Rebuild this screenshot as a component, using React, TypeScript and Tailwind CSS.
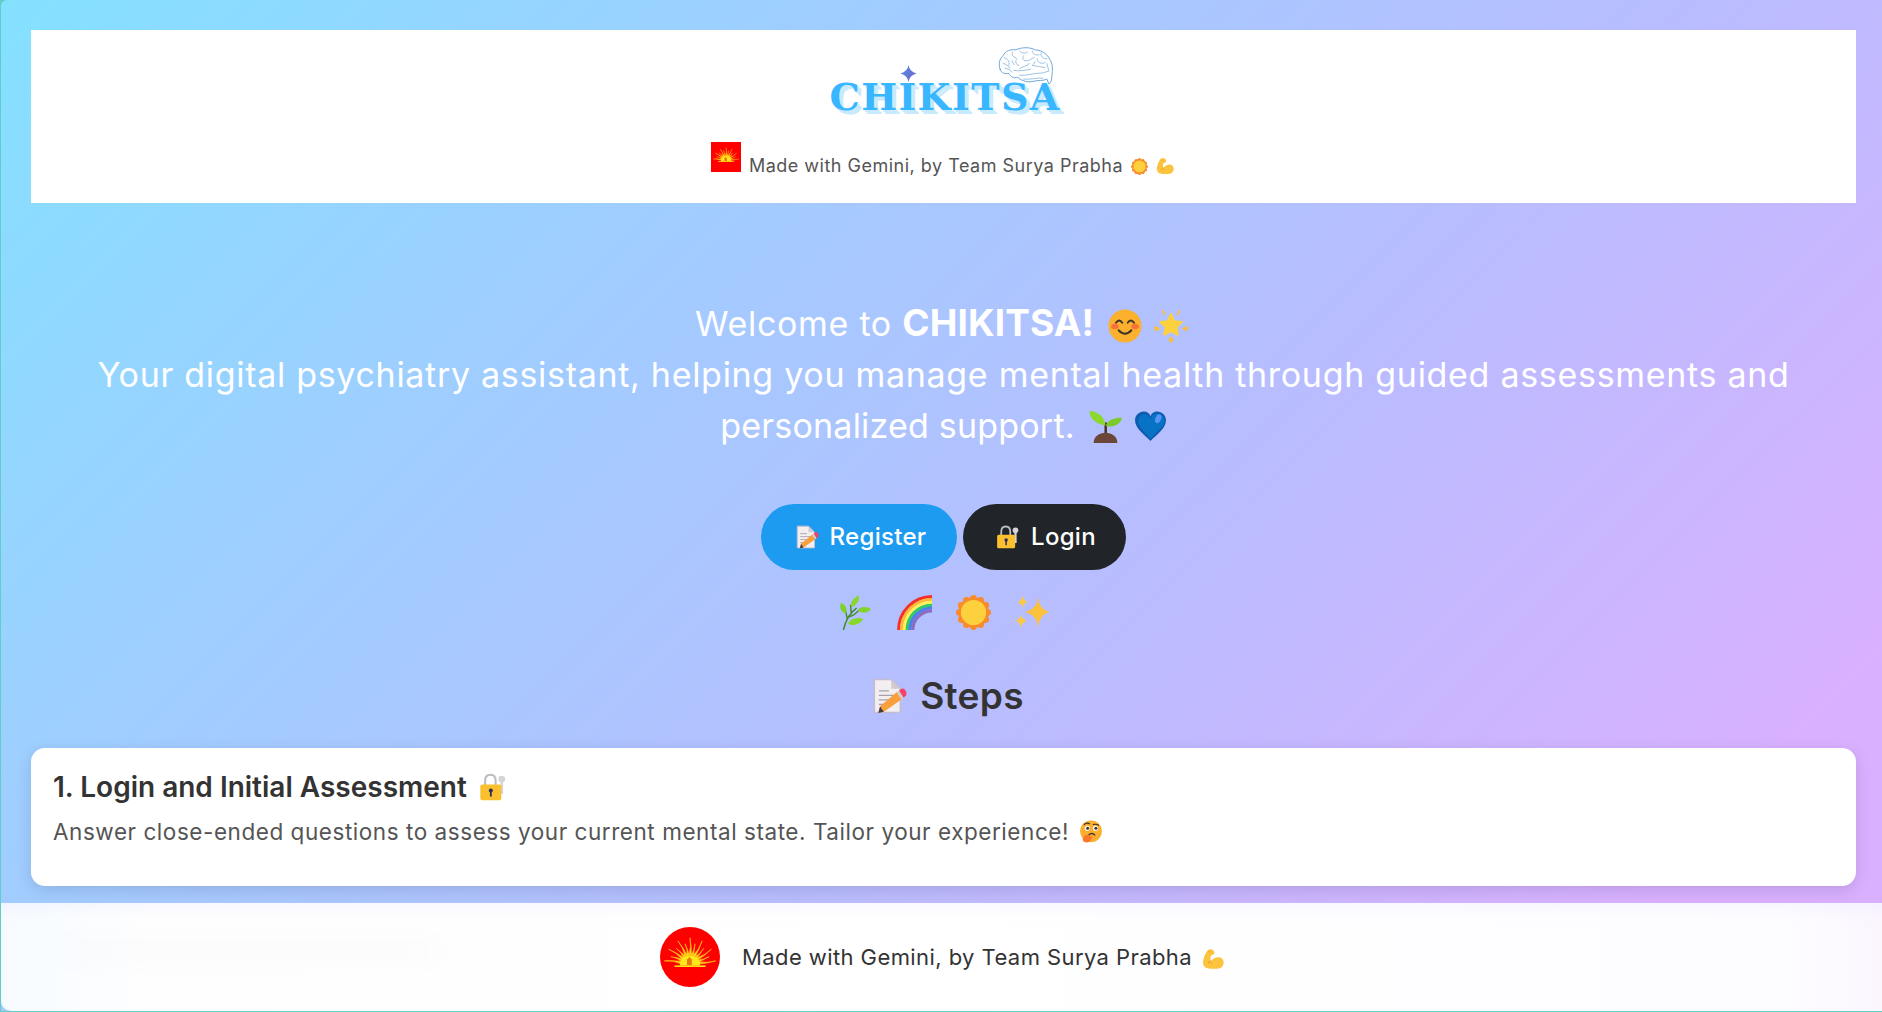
import React from "react";

function Smile({ s }: { s: number }) {
  return (
    <svg width={s} height={s} viewBox="0 0 32 32" className="inline-block shrink-0">
      <circle cx="16" cy="16" r="15.5" fill="#fbb02e" />
      <ellipse cx="6.5" cy="16.5" rx="3.5" ry="2.6" fill="#f8703c" />
      <ellipse cx="25.5" cy="16.5" rx="3.5" ry="2.6" fill="#f8703c" />
      <path d="M7.5 13 Q10.5 8.5 13.5 13 M18.5 13 Q21.5 8.5 24.5 13" fill="none" stroke="#40322c" strokeWidth="1.8" strokeLinecap="round" />
      <path d="M10 20 Q16 26.5 22 20" fill="none" stroke="#40322c" strokeWidth="1.8" strokeLinecap="round" />
    </svg>
  );
}
function GlowStar({ s }: { s: number }) {
  return (
    <svg width={s} height={s} viewBox="0 0 32 32" className="inline-block shrink-0">
      <path d="M16 5 L19 11.5 L26 12.3 L21 17.2 L22.4 24.2 L16 20.8 L9.6 24.2 L11 17.2 L6 12.3 L13 11.5 Z" fill="#fdd13e" stroke="#fdd13e" strokeWidth="2" strokeLinejoin="round" />
      <path d="M8 1.5 L10 5 M24 1.5 L22 5 M1 17 L4.5 18.5 L1.5 20 Z M31 17 L27.5 18.5 L30.5 20 Z M16 26.5 L14.5 29.5 Q16 32 17.5 29.5 Z" fill="#f9bd38" stroke="#f9bd38" strokeWidth="1.6" strokeLinecap="round" strokeLinejoin="round" />
    </svg>
  );
}
function Seedling({ s }: { s: number }) {
  return (
    <svg width={s} height={s} viewBox="0 0 32 32" className="inline-block shrink-0">
      <path d="M15 12 h2.4 V26 h-2.4Z" fill="#4f2f22" />
      <path d="M16 15 C16 8 9 1 0.5 1 C0 8 7 14 16 15Z" fill="#8bd82f" />
      <path d="M16.4 15.5 C18 9.5 24 7.5 32 7.5 C31 13.5 24 17.5 16.4 15.5Z" fill="#7bc92a" />
      <path d="M4.5 32 C4.5 25.5 10 22 16 22 C22 22 27.5 25.5 27.5 32 Z" fill="#6b4737" />
    </svg>
  );
}
function BlueHeart({ s }: { s: number }) {
  return (
    <svg width={s} height={s} viewBox="0 0 32 32" className="inline-block shrink-0">
      <path d="M16 30 C10 24 1 18 1 10 C1 5 5 1.5 9.5 1.5 C12.5 1.5 15 3 16 6 C17 3 19.5 1.5 22.5 1.5 C27 1.5 31 5 31 10 C31 18 22 24 16 30Z" fill="#0d5cb0" />
      <path d="M16 28 C12 23 4 17 4 10.5 C4 6.5 7 4 10 4 C13 4 15 6 16 8.5 C17 6 19 3.5 22 3.5 C27 3.5 29.5 7 29.5 10.5 C29.5 17 20 23 16 28Z" fill="#0872c4" />
      <ellipse cx="23.5" cy="8.5" rx="2.8" ry="4.4" transform="rotate(22 23.5 8.5)" fill="#5a94f5" />
    </svg>
  );
}
function Memo({ s }: { s: number }) {
  return (
    <svg width={s} height={s} viewBox="0 0 32 32" className="inline-block shrink-0">
      <path d="M3 1.5 H18 L26 9.5 V30.5 H3Z" fill="#f3eef0" stroke="#c4bcc8" strokeWidth="1.2" />
      <path d="M18 1.5 V9.5 H26Z" fill="#d0c9d2" />
      <path d="M7 11.5 H16 M7 15.5 H22 M7 19.5 H17 M7 23.5 H11" stroke="#a8a0ae" strokeWidth="1.2" />
      <path d="M8 25 L11.5 30 L27 19 L23 12.5Z" fill="#f7a03c" />
      <path d="M6.5 31 L8 25 L11.5 30Z" fill="#4d3a30" />
      <path d="M23 12.5 L27 19 L29 17.5 L25 11Z" fill="#d4cbc9" />
      <path d="M25 11 L29 17.5 L31.5 15 Q32 12 29.5 9.5 Q27 9 25 11Z" fill="#f5406c" />
    </svg>
  );
}
function LockKey({ s }: { s: number }) {
  return (
    <svg width={s} height={s} viewBox="0 0 32 32" className="inline-block shrink-0">
      <path d="M7 15 V9 Q7 2 13 2 Q19 2 19 9 V15" fill="none" stroke="#bdbac0" strokeWidth="2.4" />
      <circle cx="26" cy="7" r="3.8" fill="#d7d4d8" />
      <rect x="24.5" y="9" width="3" height="15" fill="#d7d4d8" />
      <rect x="1.5" y="13" width="24" height="18" rx="2" fill="#fbc02d" />
      <circle cx="13.5" cy="20" r="2.3" fill="#2f2a5e" />
      <rect x="12.5" y="20" width="2" height="7" rx="0.8" fill="#2f2a5e" />
    </svg>
  );
}
function Herb({ s }: { s: number }) {
  return (
    <svg width={s} height={s} viewBox="0 0 32 32" className="inline-block shrink-0">
      <path d="M5 32 Q8 18 17 12 M8.5 22 L7 15 M12 16 L11.5 9 M10 20 Q15 19 21 12" fill="none" stroke="#3f8a22" strokeWidth="1.3" />
      <path d="M7 17 C2 15 1 10 3 7 C7 9 9 13 7 17Z" fill="#7ed321" />
      <path d="M12 11 C11 6 15 2 19 0.5 C20 5 17 10 12 11Z" fill="#8ad52f" />
      <path d="M18 14 C20 10 27 10 30 13 C27 17 21 17 18 14Z" fill="#83d42a" />
      <path d="M9 26 C12 21 19 20 23 22 C20 27 14 29 9 26Z" fill="#87d72c" />
    </svg>
  );
}
function Rainbow({ s }: { s: number }) {
  const cols = ["#f5312c", "#ffb938", "#fff15a", "#2fcb62", "#4f7cf0", "#8a6cc0"];
  return (
    <svg width={s} height={s} viewBox="0 0 32 32" className="inline-block shrink-0">
      {cols.map((c, i) => (
        <path key={c} d={`M${1.5 + i * 2.6} 32 A${30.5 - i * 2.6} ${30.5 - i * 2.6} 0 0 1 32 ${1.5 + i * 2.6}`} fill="none" stroke={c} strokeWidth="2.8" />
      ))}
    </svg>
  );
}
function Sun({ s }: { s: number }) {
  const pts = Array.from({ length: 12 }, (_, i) => i * 30);
  return (
    <svg width={s} height={s} viewBox="0 0 32 32" className="inline-block shrink-0">
      <circle cx="16" cy="16" r="14" fill="#f98b2a" />
      {pts.map((a) => (
        <circle key={a} cx={16 + 13 * Math.cos((a * Math.PI) / 180)} cy={16 + 13 * Math.sin((a * Math.PI) / 180)} r="3" fill="#f98b2a" />
      ))}
      <circle cx="16" cy="16" r="11.5" fill="#fdd13e" />
    </svg>
  );
}
function Sparkles({ s }: { s: number }) {
  return (
    <svg width={s} height={s} viewBox="0 0 32 32" className="inline-block shrink-0">
      <path d="M21 2 Q22 13 31.5 15.5 Q22 18 21 30 Q20 18 9 15.5 Q20 13 21 2Z" fill="#fbc13c" />
      <path d="M7 0.5 Q7.5 5 11.5 6.5 Q7.5 8 7 12 Q6.5 8 2.5 6.5 Q6.5 5 7 0.5Z" fill="#fdc93f" />
      <path d="M5.5 17.5 Q6 22 11 23.5 Q6 25 5.5 30 Q5 25 0 23.5 Q5 22 5.5 17.5Z" fill="#fdc93f" />
    </svg>
  );
}
function Muscle({ s }: { s: number }) {
  return (
    <svg width={s} height={s} viewBox="0 0 32 32" className="inline-block shrink-0">
      <path d="M10 2 C7 4 3 10 1.5 20 C1 27 6 30 12 30 H22 C28 30 31.5 26 31.5 21 C31.5 14 24 11.5 18 15 C15.5 16.5 13.5 18 12.5 19 C12 16 12.5 13 13.5 10.5 C15.5 10.5 18 10 18 7 C18 3 14 1 10 2Z" fill="#fcc43e" />
      <path d="M9 5 L12 6 M9 23 L11.5 18.5 L14 23" fill="none" stroke="#e8a020" strokeWidth="1.2" strokeLinecap="round" />
    </svg>
  );
}
function Thinking({ s }: { s: number }) {
  return (
    <svg width={s} height={s} viewBox="0 0 32 32" className="inline-block shrink-0">
      <circle cx="16" cy="15" r="14.5" fill="#fbaf2e" />
      <circle cx="11" cy="11" r="3.4" fill="#fff" /><circle cx="11.5" cy="11" r="2" fill="#40322c" />
      <circle cx="22" cy="11" r="3.4" fill="#fff" /><circle cx="22.5" cy="11" r="2" fill="#40322c" />
      <path d="M7 6 Q10 3 14 5 M19 6 Q23 5 26 7" stroke="#40322c" strokeWidth="1.6" fill="none" strokeLinecap="round" />
      <path d="M13 20 Q17 16 21 20" stroke="#40322c" strokeWidth="1.8" fill="none" strokeLinecap="round" />
      <path d="M5 27 C5 21 10 19 13 20 L18 23 L16 26 C15 30 8 32 5 27Z" fill="#f8772a" />
    </svg>
  );
}
function SuryaMark() {
  const rays = Array.from({ length: 13 }, (_, i) => -90 - 84 + i * 14);
  return (
    <>
      {rays.map((a, i) => {
        const r = (a * Math.PI) / 180;
        const l = i % 2 ? 17 : 21.5;
        const cx = 25;
        const cy = 30.5;
        const px = Math.cos(r + Math.PI / 2) * 1.1;
        const py = Math.sin(r + Math.PI / 2) * 1.1;
        const bx = cx + 7 * Math.cos(r);
        const by = cy + 7 * Math.sin(r);
        const mx = cx + l * 0.65 * Math.cos(r + 0.1);
        const my = cy + l * 0.65 * Math.sin(r + 0.1);
        return (
          <path key={a} d={`M${bx + px} ${by + py} Q${mx} ${my} ${cx + l * Math.cos(r)} ${cy + l * Math.sin(r)} Q${mx} ${my} ${bx - px} ${by - py}Z`} fill="#ffd21a" stroke="#ffd21a" strokeWidth="0.5" />
        );
      })}
      <path d="M16.5 32 A8.5 8.5 0 0 1 33.5 32Z" fill="#ffe81a" />
      <path d="M22.5 32 V27 L24.5 25 L26.5 27 V32Z" fill="#e77a10" />
      <rect x="12" y="32" width="26" height="1.3" fill="#ffe81a" />
    </>
  );
}
function Brain() {
  return (
    <svg width="56" height="37" viewBox="0 0 57 38" className="absolute top-[-27px] right-[7px]">
      <g fill="none" stroke="#6fa8dc" strokeWidth="0.7" strokeLinecap="round" strokeLinejoin="round">
        <path d="M2 23 C0 18 1 12 5 9 C7 4 13 2 18 3 C24 0 33 0 38 3 C45 3 51 8 53 13 C56 17 56 23 55 30 C55 34 54 37 52 38 L50 33 C46 35 41 34 37 35 C31 37 24 35 20 31 C16 33 12 30 11 27 C7 28 3 27 2 23Z" strokeWidth="0.9" stroke="#5b9bd5" />
        <path d="M6 11 C10 12 12 15 11 19 M5 17 C8 17 10 19 12 22 M15 5 C13 8 15 10 18 11 M19 12 C17 15 18 18 21 19 M22 4 C24 7 28 7 30 5 M26 9 C24 12 26 15 30 14 C33 14 34 11 37 11 M35 4 C35 7 38 9 42 8 M44 6 C43 10 46 12 50 12 M40 12 C40 16 44 18 48 16 M32 17 C29 20 25 20 22 22 M35 19 C39 20 44 20 48 21 M16 24 C22 25 27 24 33 23 M22 29 C28 30 35 27 41 27 C45 27 48 26 51 25 M26 33 C32 34 40 31 46 32 M7 22 C10 22 13 24 14 26 M50 17 L52 25 M14 14 L16 18 M38 15 L36 18" />
      </g>
    </svg>
  );
}
function Logo() {
  return (
    <div className="relative h-[76px] w-[236px]">
      <svg width="19" height="19" viewBox="0 0 20 20" className="absolute top-[19px] left-[73px]">
        <defs>
          <linearGradient id="sp" x1="0" y1="0" x2="1" y2="1">
            <stop offset="0" stopColor="#4f8fe8" />
            <stop offset="1" stopColor="#7a60c8" />
          </linearGradient>
        </defs>
        <path d="M10 1 Q11 8 18.5 10 Q11 12 10 19 Q9 12 1.5 10 Q9 8 10 1Z" fill="url(#sp)" />
      </svg>
      <div className="absolute bottom-[1px] left-[4px] font-['DejaVu_Serif',serif] text-[38px] leading-[46px] font-bold tracking-[1.4px] whitespace-nowrap text-[#38b6ff] [text-shadow:2px_2px_0_#c8eafc,4px_4px_0_#c8eafc]">
        CHIKITSA
        <Brain />
      </div>
    </div>
  );
}

export default function App() {
  return (
    <div className="flex h-[1012px] w-full flex-col overflow-hidden bg-[#5fcfc4] pb-px pl-px font-['Inter',sans-serif]">
      <div className="flex min-h-0 flex-1 flex-col rounded-tl-[6px] bg-[linear-gradient(135deg,#84e1ff_0%,#a0cdff_30%,#b8bdff_58%,#d8b0ff_88%)]">
        <main className="flex min-h-0 flex-1 flex-col pt-[30px] pr-[26px] pl-[30px]">
          <header className="flex h-[173px] shrink-0 flex-col items-center bg-white pt-[15px]">
            <Logo />
            <div className="mt-[21px] flex items-end gap-[8px] pr-[2px] text-[18px] leading-[24px] tracking-[0.5px] text-[#555555]">
              <svg width="30" height="30" viewBox="0 0 50 50" className="mb-[6px]">
                <rect width="50" height="50" fill="#ff0000" />
                <SuryaMark />
              </svg>
              <span className="flex items-center gap-[8px]">
                Made with Gemini, by Team Surya Prabha
                <Sun s={17} />
                <Muscle s={18} />
              </span>
            </div>
          </header>
          <section className="mt-[94px] text-center text-[34px] leading-[51px] tracking-[0.7px] text-white">
            <div className="flex items-center justify-center pr-[4px]">
              <span>
                Welcome to <strong className="text-[37px] font-bold tracking-[0.1px]">CHIKITSA!</strong>
              </span>
              <span className="ml-[14px]"><Smile s={34} /></span>
              <span className="ml-[12px]"><GlowStar s={34} /></span>
            </div>
            <div className="px-[40px]">
              Your digital psychiatry assistant, helping you manage mental health through guided assessments and{" "}
              <span className="tracking-[0.2px]">personalized support.</span>
              <span className="ml-[14px] inline-flex items-center gap-[12px] align-[-5px]">
                <Seedling s={33} />
                <BlueHeart s={33} />
              </span>
            </div>
          </section>
          <div className="mt-[53px] flex justify-center gap-[6px] text-[24px] font-medium tracking-[0.3px] text-white">
            <button className="flex h-[66px] w-[196px] items-center justify-center gap-[11px] rounded-full bg-[#1d9bf0] pl-[3px]">
              <Memo s={24} />
              Register
            </button>
            <button className="flex h-[66px] w-[163px] items-center justify-center gap-[11px] rounded-full bg-[#212529] pl-[3px]">
              <LockKey s={24} />
              Login
            </button>
          </div>
          <div className="mt-[25px] flex justify-center gap-[24px]">
            <Herb s={35} />
            <Rainbow s={35} />
            <Sun s={35} />
            <Sparkles s={35} />
          </div>
          <h2 className="mt-[42px] flex items-center justify-center gap-[13px] pl-[8px] text-[37px] leading-[48px] font-semibold tracking-[0.3px] text-[#333333]">
            <Memo s={36} />
            Steps
          </h2>
          <article className="mt-[28px] h-[138px] shrink-0 rounded-[14px] bg-white px-[22px] pt-[20px] shadow-[0_4px_15px_rgba(0,0,0,0.12)]">
            <h3 className="flex items-center gap-[12px] text-[28px] leading-[38px] font-semibold text-[#333333]">
              1. Login and Initial Assessment
              <LockKey s={28} />
            </h3>
            <p className="mt-[8px] flex items-center gap-[10px] text-[22.5px] leading-[35px] tracking-[0.55px] text-[#555555]">
              Answer close-ended questions to assess your current mental state. Tailor your experience!
              <Thinking s={24} />
            </p>
          </article>
        </main>
        <footer className="relative z-10 flex h-[108px] shrink-0 items-center justify-center overflow-hidden rounded-bl-[10px] bg-[linear-gradient(90deg,#f6fbff,#fefefe_8%,#ffffff_50%,#fdfcff_95%,#fbf6ff)] text-[22px] tracking-[0.42px] text-[#333333] shadow-[inset_0_14px_16px_-10px_rgba(215,215,255,0.22)]">
          <div className="absolute top-[36px] left-[60px] h-[24px] w-[380px] rounded-full bg-black/[0.012] blur-md" />
          <svg width="60" height="60" viewBox="0 0 50 50" className="mr-[22px] ml-[1px]">
            <clipPath id="c"><circle cx="25" cy="25" r="25" /></clipPath>
            <g clipPath="url(#c)">
              <rect width="50" height="50" fill="#ff0000" />
              <SuryaMark />
            </g>
          </svg>
          Made with Gemini, by Team Surya Prabha
          <span className="ml-[10px]"><Muscle s={22} /></span>
        </footer>
      </div>
    </div>
  );
}
